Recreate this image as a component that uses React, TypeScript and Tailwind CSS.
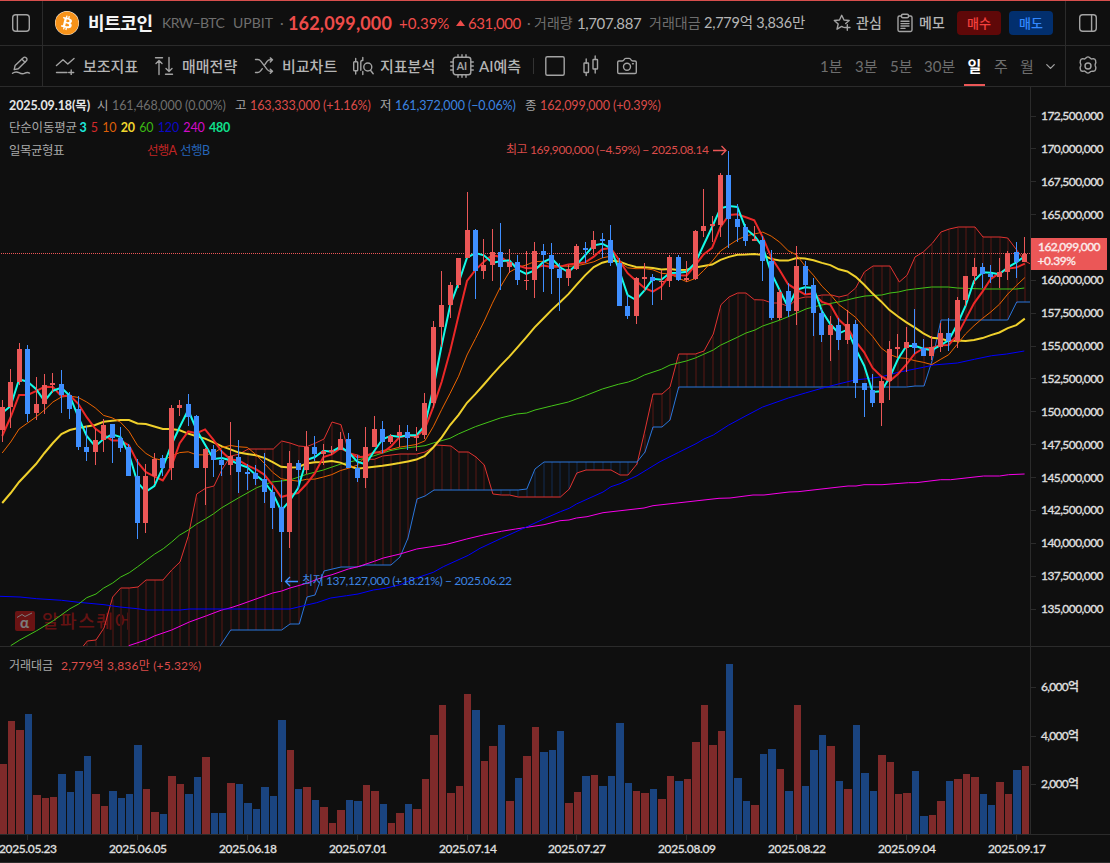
import type { ReactNode } from "react";
import clsx from "clsx";
import { FaBitcoin } from "react-icons/fa";
import { ChevronDown } from "lucide-react";

/* ----------------------------  DATA  ---------------------------- */

type Candle = [top: number, bottom: number, high: number, low: number, up: 0 | 1];

// Candle geometry on the price pane: body top/bottom, wick high/low, direction
const candles: Candle[] = [
  [407, 430, 400, 442, 1], [382, 407, 369, 428, 1], [349, 382, 343, 385, 1], [349, 414, 345, 422, 0],
  [404, 413, 377, 420, 1], [385, 404, 374, 414, 1], [383, 385, 373, 393, 1], [384, 395, 370, 413, 0],
  [395, 409, 392, 419, 0], [409, 447, 396, 450, 0], [447, 452, 426, 461, 0], [440, 452, 429, 465, 1],
  [425, 440, 419, 452, 1], [424, 438, 424, 463, 0], [438, 448, 427, 452, 0], [447, 476, 444, 476, 0],
  [476, 523, 459, 539, 0], [476, 523, 464, 533, 1], [459, 476, 453, 484, 1], [458, 468, 455, 476, 0],
  [408, 468, 405, 480, 1], [405, 408, 400, 416, 1], [404, 417, 394, 426, 0], [416, 468, 415, 468, 0],
  [449, 468, 448, 505, 1], [449, 460, 445, 477, 0], [460, 465, 450, 476, 0], [456, 465, 422, 475, 1],
  [457, 472, 440, 493, 0], [472, 474, 464, 490, 0], [473, 479, 465, 485, 0], [479, 492, 453, 503, 0],
  [492, 508, 485, 529, 0], [507, 532, 480, 582, 0], [463, 532, 451, 548, 1], [463, 470, 460, 489, 0],
  [447, 470, 431, 474, 1], [447, 454, 436, 461, 0], [451, 454, 444, 465, 1], [450, 452, 446, 455, 1],
  [439, 450, 432, 450, 1], [439, 468, 433, 468, 0], [468, 478, 455, 482, 0], [447, 478, 427, 488, 1],
  [429, 447, 416, 447, 1], [429, 442, 421, 453, 0], [436, 442, 434, 444, 1], [432, 436, 425, 447, 1],
  [432, 438, 425, 450, 0], [436, 438, 427, 451, 1], [403, 435, 393, 439, 1], [327, 403, 321, 408, 1],
  [305, 327, 271, 347, 1], [285, 305, 282, 318, 1], [258, 285, 258, 288, 1], [230, 258, 192, 258, 1],
  [230, 271, 229, 299, 0], [265, 271, 239, 279, 1], [252, 265, 229, 281, 1], [252, 267, 223, 290, 0],
  [262, 267, 249, 273, 1], [262, 280, 255, 285, 0], [280, 281, 251, 290, 1], [251, 280, 242, 298, 1],
  [251, 255, 244, 292, 0], [255, 269, 243, 294, 0], [269, 278, 263, 311, 0], [269, 278, 265, 286, 1],
  [246, 269, 244, 270, 1], [248, 250, 242, 263, 0], [240, 249, 231, 255, 1], [239, 241, 233, 258, 0],
  [240, 263, 225, 266, 0], [263, 306, 258, 306, 0], [306, 316, 295, 319, 0], [278, 316, 277, 324, 1],
  [277, 279, 263, 291, 1], [277, 281, 274, 305, 0], [281, 282, 270, 300, 1], [257, 281, 255, 287, 1],
  [257, 280, 255, 281, 0], [278, 280, 261, 282, 1], [231, 279, 230, 280, 1], [226, 231, 189, 237, 1],
  [224, 226, 216, 242, 1], [175, 225, 173, 237, 1], [175, 219, 151, 248, 0], [219, 227, 204, 242, 0],
  [227, 241, 224, 246, 0], [239, 241, 226, 241, 1], [240, 261, 236, 281, 0], [261, 318, 250, 320, 0],
  [292, 318, 289, 320, 1], [291, 311, 283, 317, 0], [266, 311, 246, 325, 1], [266, 285, 261, 294, 0],
  [285, 313, 278, 336, 0], [313, 335, 309, 342, 0], [325, 335, 316, 361, 1], [325, 340, 318, 350, 0],
  [324, 340, 310, 344, 1], [324, 383, 320, 398, 0], [383, 390, 383, 417, 0], [390, 403, 374, 407, 0],
  [381, 403, 376, 426, 1], [349, 381, 341, 400, 1], [347, 349, 334, 358, 1], [342, 348, 327, 372, 1],
  [343, 348, 309, 354, 0], [348, 356, 339, 356, 0], [347, 356, 336, 360, 1], [333, 347, 323, 352, 1],
  [333, 341, 318, 351, 0], [300, 341, 297, 348, 1], [276, 300, 276, 306, 1], [267, 276, 258, 284, 1],
  [267, 274, 263, 288, 0], [274, 277, 265, 283, 0], [272, 277, 258, 288, 1], [253, 272, 251, 280, 1],
  [252, 262, 242, 278, 0], [254, 262, 237, 262, 1],
];

const volumes = [
  70, 113, 104, 120, 39, 36, 37, 60, 42, 63, 78, 40, 28, 43, 36, 40, 89, 45, 22, 20, 58, 50, 40, 57, 77,
  21, 21, 51, 50, 31, 25, 47, 38, 114, 84, 45, 47, 34, 27, 11, 24, 34, 33, 49, 43, 30, 11, 21, 30, 25,
  55, 99, 129, 41, 48, 140, 124, 73, 88, 109, 33, 56, 78, 107, 82, 84, 103, 31, 42, 58, 59, 48, 58, 111,
  51, 43, 41, 45, 35, 58, 53, 55, 92, 129, 89, 103, 170, 56, 33, 29, 80, 85, 65, 43, 129, 48, 84, 99, 88,
  53, 45, 109, 61, 43, 79, 72, 40, 41, 63, 18, 19, 33, 53, 55, 60, 57, 40, 29, 52, 40, 64, 68,
];

const xAt = (i: number) => 2.24 + i * 8.4505;
const barLeft = (i: number) => Math.round(xAt(i) - 2.99);
const closes = candles.map(([top, bottom, , , up]) => (up ? top : bottom));

// seed holds the averages for the bars whose window starts before the visible range
function movingAverage(period: number, seed: number[]) {
  return closes
    .map((_, i) => {
      const from = i - period + 1;
      const y = from < 0 ? seed[i] : closes.slice(from, i + 1).reduce((a, b) => a + b, 0) / period;
      return `${xAt(i).toFixed(1)},${y.toFixed(1)}`;
    })
    .join(" ");
}

const ma3 = movingAverage(3, [413, 406]);
const ma5 = movingAverage(5, [436, 417, 395, 395]);
const ma10 = movingAverage(10, [453, 442, 429, 423, 417, 410, 402, 397, 396]);
const ma20 = movingAverage(20, [
  503, 493, 482, 473, 464, 453, 443, 434, 430, 428, 426.5, 425, 421.7, 420.7, 420, 420, 423.5, 424, 426.5,
]);

const ma60 =
  "10.7,645.7 19.7,640 36.7,630.7 53.3,620.7 70,608.7 78.7,604 86.7,597.7 96,594 103.3,588.3 112.7,583 120.7,577 129.3,572.7 137.3,567 145.3,561 154.3,554.3 163.3,548.7 171.7,542 179.3,535.3 188.3,530 196.7,524 205.3,519 213.3,514 221.3,508 238.3,498 256.7,487.7 271.7,482 290,480 306.7,474.3 323.3,470 340,464.3 356.7,460.3 373.3,456 390,450.7 400,448.7 416.7,446.7 425,445.7 433.3,443 450,438.3 458.3,434 475.3,426.7 500.3,418 516.7,414 526.7,413 535,410 551.3,406 568.3,402 585.3,395.7 602.3,389 618.3,384.3 628.3,382 636.3,379 644.3,375 661.3,369.3 670,365 686.3,361 695.3,358 713.3,350 720.3,345.3 737.3,337.3 746,333 755,330 762.7,326 779.3,320.3 788.3,316.7 806.7,308.7 821.7,305 840,301.7 855,298 865,296 881.7,295 890,293 898.3,292 906.7,290 914.3,289 931.7,287 948.3,287 957.3,288 983.3,289 1016.7,289 1024.3,288";
const ma120 =
  "0,596.3 20,597 36.7,598.7 61.7,600.3 78.7,602.3 104,604.7 120,607 137.3,608.7 146.7,610 180,610 189.3,609 290,609 306.7,605 316.7,602.7 330.7,598 346.7,595.7 358,594 373.3,590 385,588.3 400,584.7 413.3,579 433.3,572.3 443.3,566.7 468.3,555.3 480,548.3 501.4,538.3 526.4,527 544.3,518.7 560.4,511.7 569.3,508.3 576.4,504 603,492 611,486.7 620,483.7 637,475.7 660,461.7 678.7,452.3 696,443.7 704,439 713.3,435 728.3,425.3 745,416.3 762.7,407 788.3,398 805.3,393 821.7,388.3 838.3,384 855,380 870,378.3 881.7,376.7 898.3,372.3 923.3,367.3 933.3,365 957.3,363 974.3,359.3 991.7,355.7 1006.7,354 1024.3,351";
const ma240 =
  "128.7,645.7 146.7,639.7 154.3,636 171.7,630 189.3,622 206.7,615.7 221.7,610 230,608 240,604.7 272.7,593 281.7,591 290,588 306.7,583.3 323.3,577 332,574.7 348.3,569 358,566.7 374.3,561.3 383.3,558 400,554 416.7,549 446.7,544.3 466.7,539 483.3,535 501.4,531.3 515.7,529 544,524.7 560,520.7 569,520 576.4,518 587,516.7 603,512.7 644,508 653,505.7 719,498.3 730,498 753,495 764,495 789,492 798,491.7 848,486 856,486 864,484.7 882,484.7 908.6,482.7 916,482.7 940.7,479.7 950.7,479.7 983.6,476 999.6,476 1008.6,474.7 1024.6,474";

type Point = [number, number];

const spanA: Point[] = [
  [83.3, 646], [87.3, 641], [96, 640], [104, 628], [112.7, 597], [120.7, 588], [129.3, 588], [138, 587],
  [146, 580], [163, 580], [171.7, 570], [180, 562], [188.3, 536], [196.7, 494], [206, 488], [214, 486],
  [221.7, 470], [230.7, 456], [238.7, 454.3], [248.3, 449], [273.3, 449], [281.7, 441], [290, 443],
  [298.7, 446], [306.7, 446.7], [315, 443.3], [324, 439], [332, 422], [341, 424.7], [349, 453], [358, 455],
  [365.3, 459.3], [374.3, 459.3], [382.7, 456], [400, 454], [416.7, 454], [425, 452], [436.7, 445],
  [451, 446], [458.7, 452], [468.3, 452], [476, 457], [484.3, 465], [492.9, 494], [501.4, 495], [509.6, 495],
  [518.2, 497], [560.4, 497], [569.3, 489], [576.8, 473], [586, 470], [611, 470], [620, 475], [628, 475],
  [637, 464], [645, 430], [653, 394], [662, 394], [670, 387], [678.7, 354], [695.3, 354], [704, 351],
  [713.3, 334], [721, 304.7], [729, 297], [737.7, 293], [746, 293], [754.3, 299.7], [763.3, 300],
  [772, 303], [780, 303], [788.3, 306.7], [796.7, 299], [805.3, 297], [813.3, 297], [821.7, 295],
  [831.7, 295], [839, 297], [847.3, 295], [855.7, 288], [864.3, 272], [873, 266], [890, 266], [899.3, 282],
  [907, 275.3], [915, 257], [923.3, 252], [932.3, 243.3], [941, 232], [949.3, 229], [958.3, 227],
  [975, 227], [983, 237], [1000, 237], [1007.7, 238], [1016.7, 250], [1025, 261], [1030, 263.7],
];
const spanB: Point[] = [
  [220, 646], [230.7, 630], [281.7, 630], [290, 624], [299.3, 624], [307, 597], [315, 595], [324, 571],
  [341, 567], [356.7, 567], [365.3, 565], [391, 565], [400, 557], [408, 538], [417, 499], [425, 496],
  [434, 490], [518.2, 490], [526.8, 489], [535, 469], [544, 462], [637, 462], [645, 452], [653, 427],
  [662, 427], [670, 420], [678.7, 387], [906.7, 387], [915, 386], [924, 386], [932.3, 360], [941, 320],
  [1007.7, 320], [1016.7, 302], [1030, 302],
];

function yOn(line: Point[], x: number) {
  for (let i = 1; i < line.length; i++) {
    const [x0, y0] = line[i - 1];
    const [x1, y1] = line[i];
    if (x >= x0 && x <= x1) return y0 + ((y1 - y0) * (x - x0)) / (x1 - x0);
  }
  return 646;
}

// the empty slot sits under the current price tag
const priceTicks = [
  "172,500,000", "170,000,000", "167,500,000", "165,000,000", "", "160,000,000", "157,500,000",
  "155,000,000", "152,500,000", "150,000,000", "147,500,000", "145,000,000", "142,500,000", "140,000,000",
  "137,500,000", "135,000,000",
];
const dateTicks = [
  "2025.05.23", "2025.06.05", "2025.06.18", "2025.07.01", "2025.07.14", "2025.07.27", "2025.08.09",
  "2025.08.22", "2025.09.04", "2025.09.17",
];

/* ----------------------------  ICONS  ---------------------------- */

function Icon({ w, h, className, children }: { w: number; h: number; className?: string; children: ReactNode }) {
  return (
    <svg
      width={w}
      height={h}
      viewBox={`0 0 ${w} ${h}`}
      fill="none"
      stroke="#a3a3a3"
      strokeWidth={1.4}
      strokeLinecap="round"
      strokeLinejoin="round"
      className={clsx("shrink-0", className)}
    >
      {children}
    </svg>
  );
}

const PanelIcon = ({ right }: { right?: boolean }) => (
  <Icon w={20} h={20}>
    <rect x="1.7" y="1.7" width="16.6" height="16.6" rx="3" />
    <path d={right ? "M13.6 1.7v16.6" : "M6.4 1.7v16.6"} />
  </Icon>
);

const PenIcon = () => (
  <Icon w={20} h={20}>
    <path d="M3.2 13.6l.9-4L12.3 1.7a1.9 1.9 0 0 1 2.7 0l.4.4a1.9 1.9 0 0 1 0 2.7L7.3 12.8z" />
    <path d="M11 3.2l3 3" />
    <path d="M1.5 17.3c2.4-1.8 4.6-1.6 6.4-.6 2.3 1.3 3.6 1.8 6 .5 1.6-.9 3-.9 4.6-.1" />
  </Icon>
);

const IndicatorIcon = () => (
  <Icon w={20} h={18}>
    <path d="M1.5 8.500L8 2.700l4.800 4.300L19 1.500M1.500 15.500h10.500M16.200 13v5M13.700 15.500h5" />
  </Icon>
);

const StrategyIcon = () => (
  <Icon w={20} h={20}>
    <path d="M1.500 1.700h7M5 18.500V4.500M2 7.500l3-3 3 3M11.500 18.300h7M15 1.500v14M12 12.500l3 3 3-3" />
  </Icon>
);

const ShuffleIcon = () => (
  <Icon w={20} h={18}>
    <path d="M1.500 2.500h2.300c1.200 0 2.200.6 3 1.600l6.300 8.300c.8 1 1.800 1.800 3 1.800h2M1.500 15.500h2.300c1.200 0 2.200-.7 3-1.800l1.500-2M11 7.400l2.100-3c.8-1 1.800-1.600 3-1.600h2M16.300.9l2.200 1.900-2.200 2.100M16.300 12.200l2.200 2-2.200 2.100" />
  </Icon>
);

const AnalysisIcon = () => (
  <Icon w={23} h={20}>
    <rect x="1.700" y="5.700" width="4" height="9" rx=".8" />
    <path d="M3.700 2.500v3M3.700 15v3" />
    <path d="M10.800 4.200a2 2 0 0 0-2 2v8M10.800 1.500v3M10.800 15.500v3" />
    <circle cx="15.800" cy="11" r="4" />
    <path d="M18.500 14.200l2.700 3.500" />
  </Icon>
);

const ChipIcon = () => (
  <Icon w={24} h={24}>
    <rect x="3.200" y="3.200" width="17.600" height="17.600" rx="2.500" />
    <path d="M8 3V.7M12 3V.7M16 3V.7M8 23.300V21M12 23.300V21M16 23.300V21M3 8H.7M3 12H.7M3 16H.7M23.300 8H21M23.300 12H21M23.300 16H21" />
    <text x="6.800" y="15.700" fill="#a3a3a3" stroke="none" className="font-['Lato'] text-[10.5px] font-bold">
      AI
    </text>
  </Icon>
);

const SquareIcon = () => (
  <Icon w={22} h={22}>
    <rect x="1.800" y="1.800" width="18.400" height="18.400" rx="1.500" />
  </Icon>
);

const CandlesIcon = () => (
  <Icon w={18} h={22}>
    <rect x="2" y="8" width="4.500" height="9.500" rx=".5" />
    <rect x="11" y="4.500" width="4.500" height="9.500" rx=".5" />
    <path d="M4.200 4v4M4.200 17.500v3M13.200 1v3.500M13.200 14v4" />
  </Icon>
);

const CameraIcon = () => (
  <Icon w={22} h={18}>
    <path d="M3 4h3.200c1 0 1.400-.5 1.900-1.400.4-.8.9-1.200 1.700-1.200h3.400c.8 0 1.300.4 1.700 1.200.5.9.9 1.400 1.900 1.400H19c.8 0 1.300.5 1.300 1.300v9.900c0 .8-.5 1.300-1.300 1.300H3c-.8 0-1.300-.5-1.300-1.300V5.300C1.700 4.500 2.200 4 3 4z" />
    <circle cx="11" cy="9.800" r="3.500" />
    <path d="M16.500 6.800h.8" />
  </Icon>
);

const StarIcon = () => (
  <Icon w={18} h={18}>
    <path d="M10.500 13.300L8.700 12.400 4 15.200l1.200-5.200L1.300 6.500l5.200-.5L8.700 1.300 11 6l5.200.5-3.500 3M14.300 10.800v5.400M11.600 13.500H17" />
  </Icon>
);

const MemoIcon = () => (
  <Icon w={18} h={20}>
    <path d="M5.500 3H3.400c-.8 0-1.400.6-1.400 1.400v12.700c0 .8.6 1.400 1.400 1.400h11.200c.8 0 1.400-.6 1.400-1.400V4.400c0-.8-.6-1.400-1.400-1.400h-2.100" />
    <rect x="5.500" y="1.300" width="7" height="3.500" rx="1.200" />
    <path d="M5 8.200h8M5 10.600h8M5 13h8M5 15.400h4" />
  </Icon>
);

const GearIcon = () => (
  <Icon w={20} h={20}>
    <path d="M8.200 1.700c1-.9 2.600-.9 3.600 0l.9.800c.4.400.9.500 1.400.400l1-.1c1.200-.1 2.300.7 2.500 1.900l.2 1.200c.1.500.1.700-.1 1.200l-.4 1c-.2.600-.2 1.200 0 1.800l.4 1c.2.500.2.800.1 1.300l-.2 1.100c-.2 1.200-1.300 2-2.500 1.900l-1-.1c-.5 0-1 .1-1.400.4l-.9.8c-1 .9-2.600.9-3.600 0l-.9-.8c-.4-.3-.9-.5-1.400-.4l-1 .1c-1.200.1-2.300-.7-2.500-1.900l-.2-1.100c-.1-.5-.1-.8.1-1.300l.4-1c.2-.6.2-1.200 0-1.800l-.4-1c-.2-.5-.2-.7-.1-1.200l.2-1.200c.2-1.200 1.300-2 2.500-1.900l1 .1c.5.1 1 0 1.400-.4z" />
    <circle cx="10" cy="10" r="3" />
  </Icon>
);

/* ----------------------------  HEADER  ---------------------------- */

function Header() {
  return (
    <header className="flex h-[46px] shrink-0 border-t border-b border-t-[#d84f4d] border-b-[#2b2b2b]">
      <div className="flex w-[43px] items-center justify-center border-r border-[#2b2b2b]">
        <PanelIcon />
      </div>
      <div className="flex flex-1 items-center whitespace-nowrap pl-3">
        <div className="size-6 shrink-0 rounded-full bg-white">
          <FaBitcoin size={24} color="#f7931a" />
        </div>
        <h1 className="ml-[9px] w-[74px] text-[18px] font-bold tracking-[-0.4px] text-[#f5f5f5]">비트코인</h1>
        <span className="w-[71px] text-sm tracking-[-0.6px] text-[#6e6e6e]">KRW−BTC</span>
        <span className="w-[47px] text-sm text-[#6e6e6e]">UPBIT</span>
        <span className="w-2 text-sm text-[#6e6e6e]">·</span>
        <span className="w-[111px] text-lg font-bold tracking-[0.15px] text-[#ee4c4a]">162,099,000</span>
        <span className="w-[57px] text-[15px] text-[#ee4c4a]">+0.39%</span>
        <svg width="9" height="6" viewBox="0 0 9 6" className="mr-[3px] shrink-0 fill-[#ee4c4a]">
          <path d="M4.500 0L9 6H0z" />
        </svg>
        <span className="w-[59px] text-[15px] tracking-[-0.4px] text-[#ee4c4a]">631,000</span>
        <span className="w-[7px] text-sm text-[#6e6e6e]">·</span>
        <span className="w-[43px] text-sm text-[#6e6e6e]">거래량</span>
        <span className="w-[72px] text-[15px] tracking-[-0.4px] text-[#b5b5b5]">1,707.887</span>
        <span className="w-[55px] text-sm text-[#6e6e6e]">거래대금</span>
        <span className="text-[14.5px] tracking-[-0.25px] text-[#b5b5b5]">2,779억 3,836만</span>
      </div>
      <div className="flex items-center gap-[5px] pr-3 text-sm font-medium text-[#b5b5b5]">
        <StarIcon />
        <span className="w-[35px]">관심</span>
        <MemoIcon />
        <span className="w-[33px]">메모</span>
        <button className="h-6 w-11 rounded bg-[#5f0808] text-[13px] text-[#f5403e]">매수</button>
        <button className="ml-[3px] h-6 w-11 rounded bg-[#022f6e] text-[13px] text-[#3288ff]">매도</button>
      </div>
      <div className="flex w-[45px] items-center justify-center border-l border-[#2b2b2b]">
        <PanelIcon right />
      </div>
    </header>
  );
}

function Tool({ icon, label, className }: { icon: ReactNode; label: string; className: string }) {
  return (
    <button className={clsx("flex shrink-0 items-center text-[15px] font-medium text-[#b5b5b5]", className)}>
      {icon}
      {label}
    </button>
  );
}

function Toolbar() {
  const intervals = [
    { label: "1분", className: "w-[35px]" },
    { label: "3분", className: "w-[35px]" },
    { label: "5분", className: "w-[34px]" },
    { label: "30분", className: "w-[40px]" },
    { label: "일", className: "w-[21px] mr-[9px]", active: true },
    { label: "주", className: "w-[26px]" },
    { label: "월", className: "w-[23px]" },
  ];
  return (
    <nav className="flex h-[41px] shrink-0 border-b border-[#2b2b2b]">
      <div className="flex w-[43px] items-center justify-center border-r border-[#2b2b2b]">
        <PenIcon />
      </div>
      <div className="flex flex-1 items-center whitespace-nowrap pl-3">
        <Tool icon={<IndicatorIcon />} label="보조지표" className="w-[99px] gap-2" />
        <Tool icon={<StrategyIcon />} label="매매전략" className="w-[100px] gap-2" />
        <Tool icon={<ShuffleIcon />} label="비교차트" className="w-[98px] gap-2" />
        <Tool icon={<AnalysisIcon />} label="지표분석" className="w-[98px] gap-[5px]" />
        <Tool icon={<ChipIcon />} label="AI예측" className="w-[83px] gap-[5px]" />
        <div className="mr-2.5 h-4 w-px bg-[#333333]" />
        <SquareIcon />
        <div className="ml-4">
          <CandlesIcon />
        </div>
        <div className="ml-4">
          <CameraIcon />
        </div>
      </div>
      <div className="flex items-center whitespace-nowrap pr-[7px] text-[15px] text-[#6e6e6e]">
        {intervals.map(({ label, className, active }) => (
          <button
            key={label}
            className={clsx(
              "flex h-10 shrink-0 items-center",
              className,
              active && "justify-center border-b-2 border-[#eb5757] pt-0.5 font-bold text-white",
            )}
          >
            {label}
          </button>
        ))}
        <ChevronDown size={15} strokeWidth={2} color="#a3a3a3" />
      </div>
      <div className="flex w-[45px] items-center justify-center border-l border-[#2b2b2b]">
        <GearIcon />
      </div>
    </nav>
  );
}

/* ----------------------------  CHART  ---------------------------- */

function Legend() {
  return (
    <div className="absolute top-2 left-[9px] text-[12.5px] leading-[22px] tracking-[-0.2px] whitespace-nowrap text-[#a8a8a8]">
      <div className="flex">
        <b className="w-[88px] tracking-[-0.1px] text-[#e5e5e5]">2025.09.18(목)</b>
        <span className="w-[15px]">시</span>
        <span className="w-[123px] tracking-[-0.1px] text-[#6e6e6e]">161,468,000 (0.00%)</span>
        <span className="w-[15px]">고</span>
        <span className="w-[130px] tracking-[-0.1px] text-[#dc4c4a]">163,333,000 (+1.16%)</span>
        <span className="w-[15px]">저</span>
        <span className="w-[130px] tracking-[-0.1px] text-[#3c83e0]">161,372,000 (−0.06%)</span>
        <span className="w-[15px]">종</span>
        <span className="tracking-[-0.1px] text-[#dc4c4a]">162,099,000 (+0.39%)</span>
      </div>
      <div className="flex gap-[4.4px]">
        <span className="w-[66px]">단순이동평균</span>
        <b className="text-[#1ce8dc]">3</b>
        <span className="text-[#d42a2a]">5</span>
        <span className="text-[#dd5f08]">10</span>
        <b className="text-[#efd62e]">20</b>
        <span className="text-[#3cb814]">60</span>
        <span className="text-[#0b08c4]">120</span>
        <span className="text-[#d20bc8]">240</span>
        <b className="text-[#0fe08c]">480</b>
      </div>
      <div className="mt-px flex">
        <span className="w-[138px] tracking-[-0.5px]">일목균형표</span>
        <span className="w-[33px] tracking-[-0.8px] text-[#c02424]">선행A</span>
        <span className="tracking-[-0.5px] text-[#2665b8]">선행B</span>
      </div>
    </div>
  );
}

function Cloud() {
  return (
    <g>
      {candles.map((_, i) => {
        const x = Math.floor(xAt(i));
        if (x < 84) return null;
        const a = yOn(spanA, x);
        const b = yOn(spanB, x);
        const y = Math.min(a, b);
        return (
          <rect key={i} x={x} y={y} width={2} height={Math.abs(a - b)} fill={a < b ? "#331311" : "#101d30"} />
        );
      })}
      <polyline points={spanA.join(" ")} stroke="#e03230" />
      <polyline points={spanB.join(" ")} stroke="#2a76dc" />
    </g>
  );
}

function Candles() {
  return (
    <g shapeRendering="crispEdges">
      {candles.map(([top, bottom, high, low, up], i) => {
        const x = Math.floor(xAt(i));
        return (
          <g key={i} fill={up ? "#eb5757" : "#3f8fff"}>
            <rect x={x} y={high} width={1} height={low - high} />
            <rect x={x - 2} y={top} width={5} height={bottom - top} />
          </g>
        );
      })}
    </g>
  );
}

function PricePane() {
  return (
    <div className="relative h-[560px] border-b border-[#2b2b2b]">
      <svg
        width="1110"
        height="559"
        viewBox="0 87 1110 559"
        fill="none"
        className="block font-['Lato','Noto_Sans_CJK_KR',sans-serif]"
      >
        <g opacity="0.5">
          <rect x="15" y="611" width="20" height="20" rx="2" fill="#c41818" />
          <path d="M17 617.500l5-3 3 2 7-3.500" stroke="#e8e8e8" />
          <text x="20" y="628" fill="#e8e8e8" className="text-[15px] font-bold">
            α
          </text>
          <text x="42" y="627.500" textLength="89" fill="#b81616" className="text-[18px] font-medium">
            알파스퀘어
          </text>
        </g>
        <Cloud />
        <path d="M1 253.500h1029" stroke="#eb5757" strokeDasharray="1 1" shapeRendering="crispEdges" />
        <polyline points={ma240} stroke="#f800ea" />
        <polyline points={ma120} stroke="#0000ff" />
        <polyline points={ma60} stroke="#44c418" />
        <polyline points={ma20} stroke="#efd02c" strokeWidth={2} />
        <polyline points={ma10} stroke="#ec6400" />
        <polyline points={ma5} stroke="#ec2828" strokeWidth={2} />
        <polyline points={ma3} stroke="#14fbe8" strokeWidth={2} />
        <Candles />

        <g className="text-[12px]">
          <text x="506" y="154" textLength="203" fill="#dc4c4a">
            최고 169,900,000 (−4.59%) − 2025.08.14
          </text>
          <path d="M713 150.500h12.500M721.500 146l4.500 4.500-4.500 4.500" stroke="#eb5757" strokeWidth={1.3} />
          <text x="302" y="585" textLength="210" fill="#3c83e0">
            최저 137,127,000 (+18.21%) − 2025.06.22
          </text>
          <path d="M298 581.500h-12.500M290 577l-4.500 4.500 4.500 4.500" stroke="#3f8fff" strokeWidth={1.3} />
        </g>

        <path d="M1030.500 87v560" stroke="#2b2b2b" />
        {priceTicks.map((label, i) => {
          if (!label) return null;
          const y = 116 + i * 32.87;
          return (
            <g key={label}>
              <path d={`M1031 ${Math.floor(y) + 0.5}h5`} stroke="#2b2b2b" />
              <text
                x="1041"
                y={y + 4}
                textLength="62.500"
                fill="#dedede"
                stroke="#dedede"
                strokeWidth={0.3}
                className="text-[12px] font-medium"
              >
                {label}
              </text>
            </g>
          );
        })}
        <rect x="1031" y="238" width="76" height="32" fill="#eb5757" />
        <g fill="#fbeaea" stroke="#fbeaea" strokeWidth={0.3} className="text-[12px] font-medium">
          <text x="1038" y="251" textLength="62.500">
            162,099,000
          </text>
          <text x="1037.500" y="265" textLength="38.500">
            +0.39%
          </text>
        </g>
      </svg>
      <Legend />
    </div>
  );
}

function VolumePane() {
  return (
    <div className="relative h-[188px] border-b border-[#2b2b2b]">
      <svg
        width="1110"
        height="187"
        viewBox="0 647 1110 187"
        fill="none"
        className="block font-['Lato','Noto_Sans_CJK_KR',sans-serif]"
      >
        {volumes.map((h, i) => (
          <rect
            key={i}
            x={barLeft(i)}
            y={834 - h}
            width={barLeft(i + 1) - barLeft(i) - 1}
            height={h}
            fill={candles[i][4] ? "#7f2a2a" : "#1a4480"}
          />
        ))}
        <path d="M1030.500 647v187M1031 687.500h5M1031 736.500h5M1031 784.500h5" stroke="#2b2b2b" />
        <g fill="#dedede" stroke="#dedede" strokeWidth={0.3} className="text-[12px] font-medium">
          <text x="1041" y="691" textLength="38">6,000억</text>
          <text x="1041" y="740" textLength="38">4,000억</text>
          <text x="1041" y="788" textLength="38">2,000억</text>
        </g>
      </svg>
      <div className="absolute top-[9px] left-[9px] flex text-[12px] leading-5 whitespace-nowrap">
        <span className="w-[52px] text-[#a8a8a8]">거래대금</span>
        <span className="tracking-[0.2px] text-[#dc4c4a]">2,779억 3,836만 (+5.32%)</span>
      </div>
    </div>
  );
}

function TimeAxis() {
  return (
    <div className="h-7 border-b border-[#2b2b2b]">
      <svg width="1110" height="27" viewBox="0 835 1110 27" className="block font-['Lato',sans-serif]">
        {dateTicks.map((label, i) => {
          const x = Math.floor(xAt(3 + i * 13));
          return (
            <g key={label}>
              <path d={`M${x + 0.5} 835v5`} stroke="#2b2b2b" />
              <text
                x={x - 28}
                y="852.500"
                textLength="58"
                fill="#dedede"
                stroke="#dedede"
                strokeWidth={0.3}
                className="text-[12px] font-medium"
              >
                {label}
              </text>
            </g>
          );
        })}
      </svg>
    </div>
  );
}

export default function App() {
  return (
    <div className="flex h-[863px] w-[1110px] flex-col overflow-hidden bg-[#0f0f0f] font-['Lato','Noto_Sans_CJK_KR',sans-serif]">
      <Header />
      <Toolbar />
      <main>
        <PricePane />
        <VolumePane />
        <TimeAxis />
      </main>
    </div>
  );
}
